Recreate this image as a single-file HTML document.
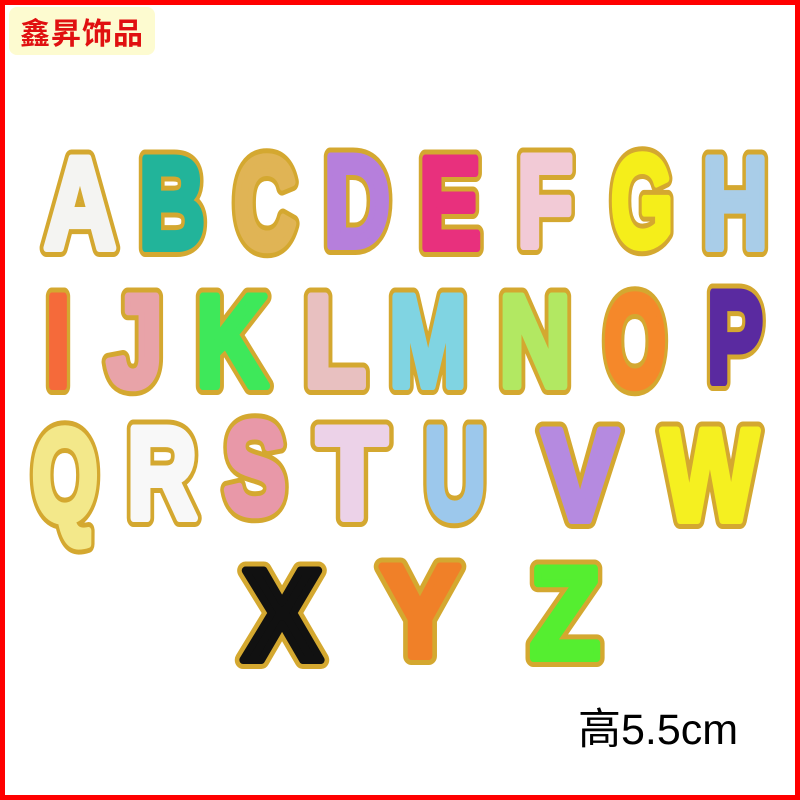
<!DOCTYPE html>
<html><head><meta charset="utf-8"><style>
html,body{margin:0;padding:0;background:#fff}
.wrap{position:relative;width:800px;height:800px;box-sizing:border-box;border:5px solid #f00;background:#fff;overflow:hidden}
.lab{position:absolute;left:4px;top:2px;width:146px;height:48px;background:#fdfbd0;border-radius:8px;color:#e01010;font:bold 30px "Noto Sans CJK SC",sans-serif;line-height:48px;text-align:center;letter-spacing:1px}
svg{position:absolute;left:-5px;top:-5px}
</style></head><body><div class="wrap">
<div class="lab">鑫昇饰品</div>
<svg width="800" height="800" viewBox="0 0 800 800" font-family="Liberation Sans, sans-serif" font-weight="bold" font-size="130" text-anchor="middle" stroke-linejoin="round">
<g fill="#d4a830" stroke="#d4a830" stroke-width="18">
<text x="80" y="248" textLength="72" lengthAdjust="spacingAndGlyphs">A</text>
<text x="172" y="248" textLength="66" lengthAdjust="spacingAndGlyphs">B</text>
<text x="265" y="248" textLength="62" lengthAdjust="spacingAndGlyphs">C</text>
<text x="357" y="246" textLength="66" lengthAdjust="spacingAndGlyphs">D</text>
<text x="450" y="248" textLength="62" lengthAdjust="spacingAndGlyphs">E</text>
<text x="545" y="246" textLength="56" lengthAdjust="spacingAndGlyphs">F</text>
<text x="642" y="246" textLength="62" lengthAdjust="spacingAndGlyphs">G</text>
<text x="735" y="248" textLength="66" lengthAdjust="spacingAndGlyphs">H</text>
<text x="58" y="386" textLength="24" lengthAdjust="spacingAndGlyphs">I</text>
<text x="135" y="386" textLength="56" lengthAdjust="spacingAndGlyphs">J</text>
<text x="232" y="386" textLength="72" lengthAdjust="spacingAndGlyphs">K</text>
<text x="335" y="386" textLength="62" lengthAdjust="spacingAndGlyphs">L</text>
<text x="428" y="386" textLength="78" lengthAdjust="spacingAndGlyphs">M</text>
<text x="535" y="386" textLength="72" lengthAdjust="spacingAndGlyphs">N</text>
<text x="635" y="386" textLength="62" lengthAdjust="spacingAndGlyphs">O</text>
<text x="735" y="382" textLength="56" lengthAdjust="spacingAndGlyphs">P</text>
<text x="65" y="520" textLength="66" lengthAdjust="spacingAndGlyphs">Q</text>
<text x="162" y="518" textLength="70" lengthAdjust="spacingAndGlyphs">R</text>
<text x="255" y="513" textLength="62" lengthAdjust="spacingAndGlyphs">S</text>
<text x="352" y="518" textLength="70" lengthAdjust="spacingAndGlyphs">T</text>
<text x="455" y="518" textLength="62" lengthAdjust="spacingAndGlyphs">U</text>
<text x="580" y="520" textLength="76" lengthAdjust="spacingAndGlyphs">V</text>
<text x="710" y="520" textLength="96" lengthAdjust="spacingAndGlyphs">W</text>
<text x="282" y="660" textLength="80" lengthAdjust="spacingAndGlyphs">X</text>
<text x="420" y="656" textLength="80" lengthAdjust="spacingAndGlyphs">Y</text>
<text x="565" y="658" textLength="70" lengthAdjust="spacingAndGlyphs">Z</text>
</g>
<g stroke-width="8">
<text x="80" y="248" fill="#f4f4f2" stroke="#f4f4f2" textLength="72" lengthAdjust="spacingAndGlyphs">A</text>
<text x="172" y="248" fill="#22b49a" stroke="#22b49a" textLength="66" lengthAdjust="spacingAndGlyphs">B</text>
<text x="265" y="248" fill="#e0b455" stroke="#e0b455" textLength="62" lengthAdjust="spacingAndGlyphs">C</text>
<text x="357" y="246" fill="#b67fdc" stroke="#b67fdc" textLength="66" lengthAdjust="spacingAndGlyphs">D</text>
<text x="450" y="248" fill="#e8307d" stroke="#e8307d" textLength="62" lengthAdjust="spacingAndGlyphs">E</text>
<text x="545" y="246" fill="#f2cad6" stroke="#f2cad6" textLength="56" lengthAdjust="spacingAndGlyphs">F</text>
<text x="642" y="246" fill="#f5ee1a" stroke="#f5ee1a" textLength="62" lengthAdjust="spacingAndGlyphs">G</text>
<text x="735" y="248" fill="#a9cde8" stroke="#a9cde8" textLength="66" lengthAdjust="spacingAndGlyphs">H</text>
<text x="58" y="386" fill="#f56a3a" stroke="#f56a3a" textLength="24" lengthAdjust="spacingAndGlyphs">I</text>
<text x="135" y="386" fill="#e8a3a8" stroke="#e8a3a8" textLength="56" lengthAdjust="spacingAndGlyphs">J</text>
<text x="232" y="386" fill="#3ee85a" stroke="#3ee85a" textLength="72" lengthAdjust="spacingAndGlyphs">K</text>
<text x="335" y="386" fill="#e8c0c0" stroke="#e8c0c0" textLength="62" lengthAdjust="spacingAndGlyphs">L</text>
<text x="428" y="386" fill="#80d4e2" stroke="#80d4e2" textLength="78" lengthAdjust="spacingAndGlyphs">M</text>
<text x="535" y="386" fill="#b2e862" stroke="#b2e862" textLength="72" lengthAdjust="spacingAndGlyphs">N</text>
<text x="635" y="386" fill="#f5882a" stroke="#f5882a" textLength="62" lengthAdjust="spacingAndGlyphs">O</text>
<text x="735" y="382" fill="#5a2aa0" stroke="#5a2aa0" textLength="56" lengthAdjust="spacingAndGlyphs">P</text>
<text x="65" y="520" fill="#f3e88a" stroke="#f3e88a" textLength="66" lengthAdjust="spacingAndGlyphs">Q</text>
<text x="162" y="518" fill="#f8f8f8" stroke="#f8f8f8" textLength="70" lengthAdjust="spacingAndGlyphs">R</text>
<text x="255" y="513" fill="#e898a8" stroke="#e898a8" textLength="62" lengthAdjust="spacingAndGlyphs">S</text>
<text x="352" y="518" fill="#ecd2e8" stroke="#ecd2e8" textLength="70" lengthAdjust="spacingAndGlyphs">T</text>
<text x="455" y="518" fill="#9cc8ec" stroke="#9cc8ec" textLength="62" lengthAdjust="spacingAndGlyphs">U</text>
<text x="580" y="520" fill="#b58ae0" stroke="#b58ae0" textLength="76" lengthAdjust="spacingAndGlyphs">V</text>
<text x="710" y="520" fill="#f5f020" stroke="#f5f020" textLength="96" lengthAdjust="spacingAndGlyphs">W</text>
<text x="282" y="660" fill="#111" stroke="#111" textLength="80" lengthAdjust="spacingAndGlyphs">X</text>
<text x="420" y="656" fill="#f08028" stroke="#f08028" textLength="80" lengthAdjust="spacingAndGlyphs">Y</text>
<text x="565" y="658" fill="#55ee30" stroke="#55ee30" textLength="70" lengthAdjust="spacingAndGlyphs">Z</text>
</g>
<text x="578" y="744" font-size="43" font-weight="normal" fill="#000" text-anchor="start" font-family="Liberation Sans, Noto Sans CJK SC, sans-serif">高5.5cm</text>
</svg>
</div></body></html>
